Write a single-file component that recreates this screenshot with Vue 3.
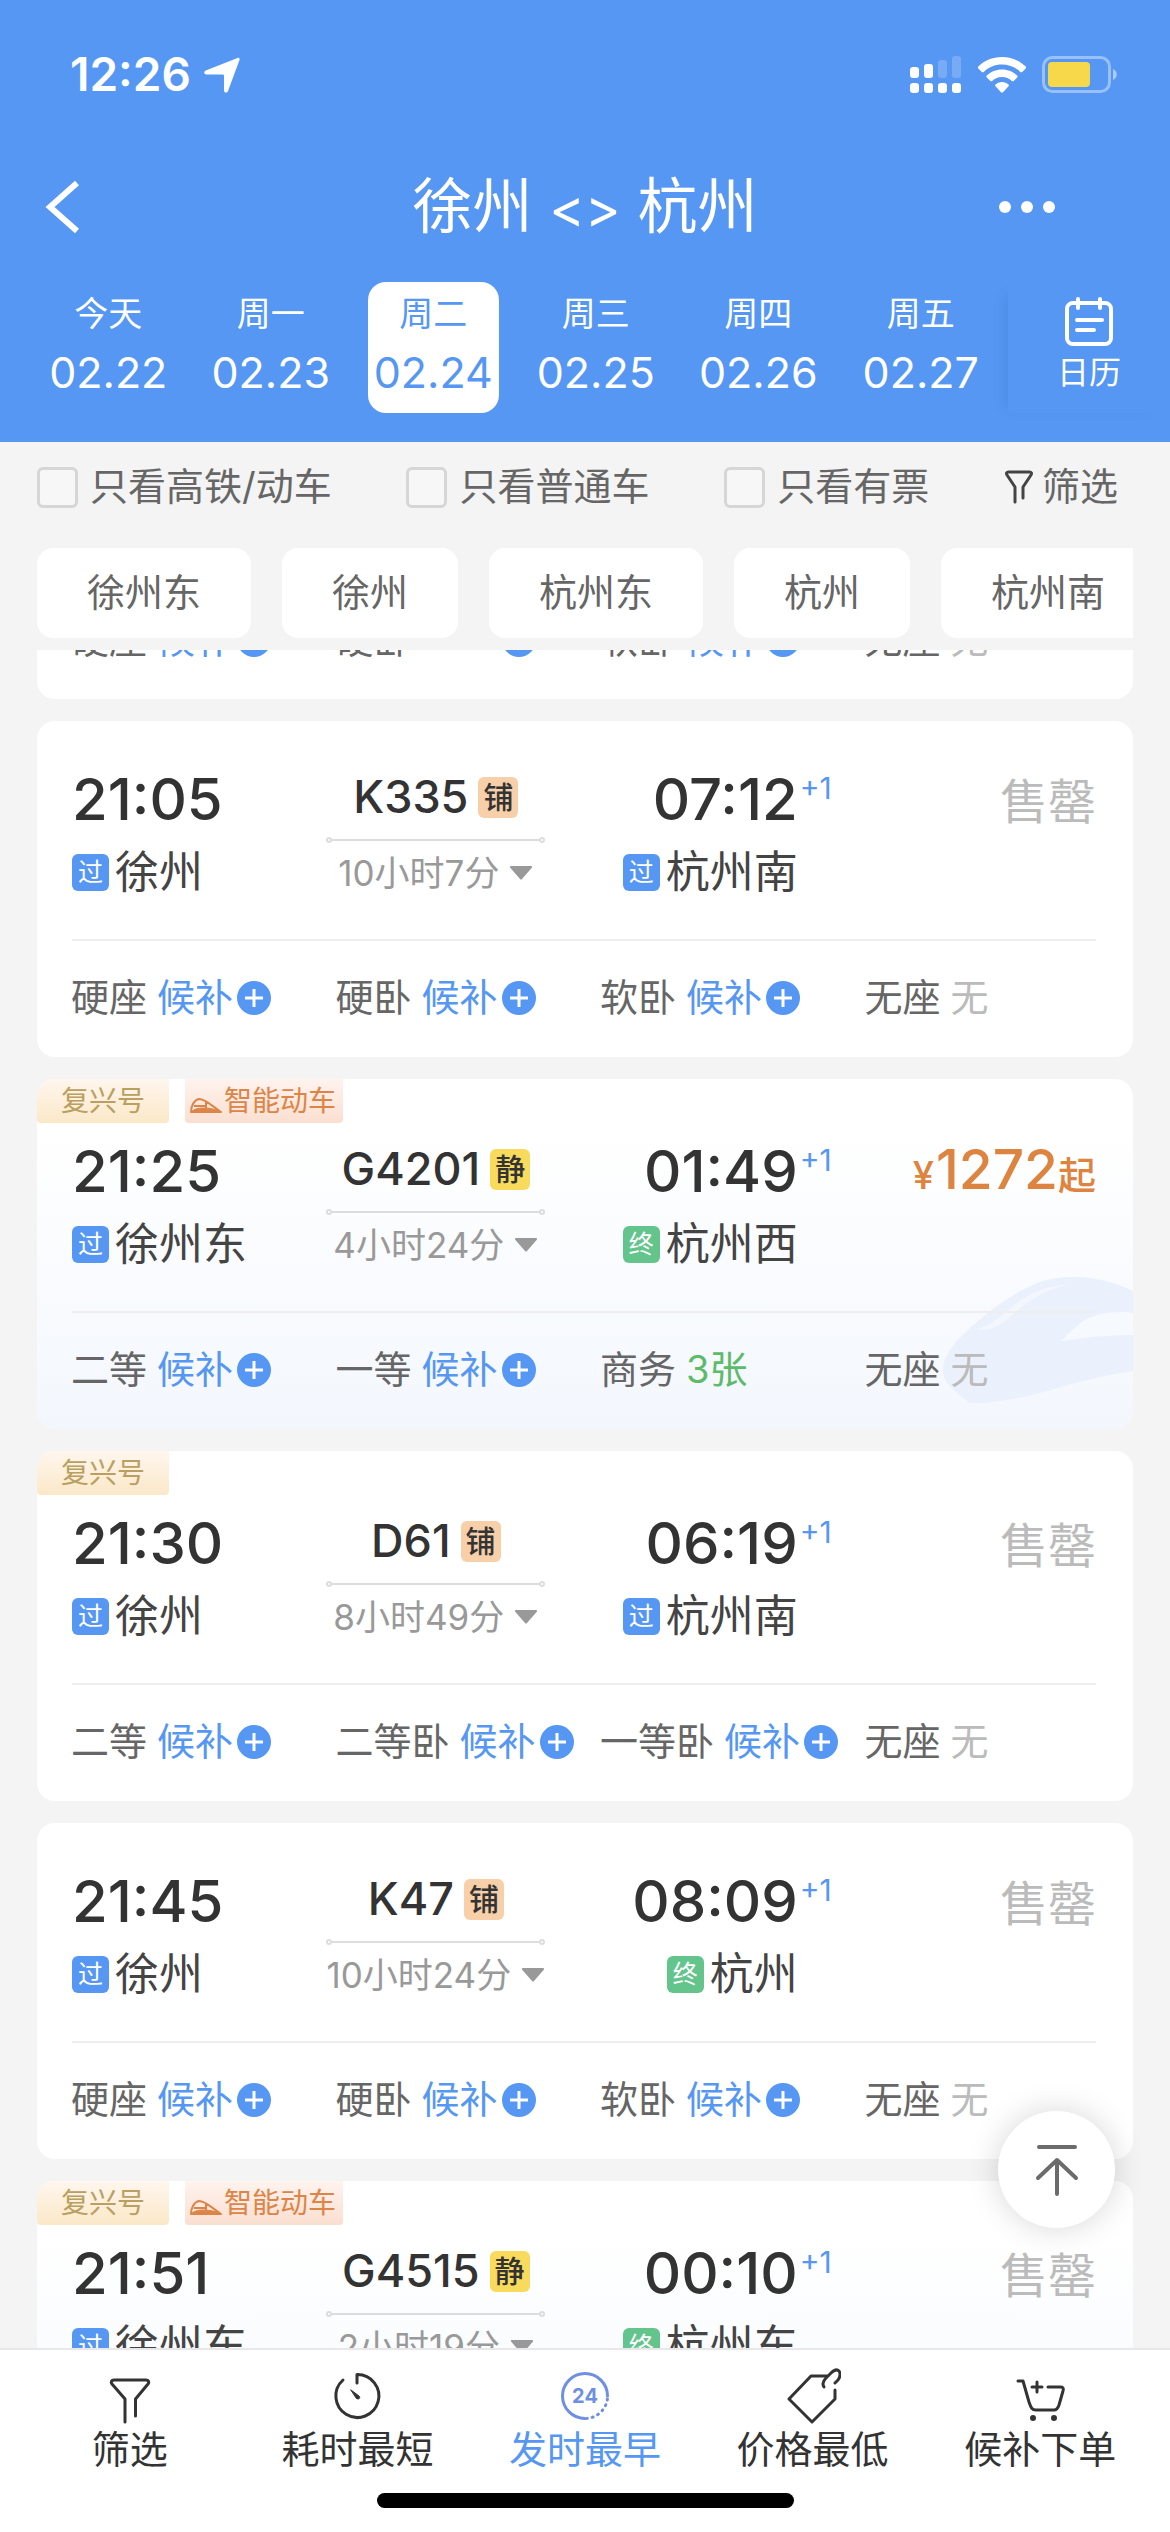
<script setup>
    import { ref, onMounted } from 'vue'

    const dates = [
        { week: '今天', day: '02.22' },
        { week: '周一', day: '02.23' },
        { week: '周二', day: '02.24' },
        { week: '周三', day: '02.25' },
        { week: '周四', day: '02.26' },
        { week: '周五', day: '02.27' },
    ]
    const activeDay = ref('02.24')

    const filters = ref([
        { id: 'gaotie', label: '只看高铁/动车', checked: false },
        { id: 'putong', label: '只看普通车', checked: false },
        { id: 'youpiao', label: '只看有票', checked: false },
    ])

    const stations = ['徐州东', '徐州', '杭州东', '杭州', '杭州南']

    const wait = (name) => ({ name, type: 'wait', text: '候补' })
    const none = { name: '无座', type: 'none', text: '无' }

    const trains = [
        {
            seats: [wait('硬座'), { name: '硬卧', type: 'wait', text: '' }, wait('软卧'), none],
        },
        {
            code: 'K335', mark: '铺', start: '21:05', end: '07:12', time: '10小时7分',
            from: '徐州', to: '杭州南', toMark: '过',
            seats: [wait('硬座'), wait('硬卧'), wait('软卧'), none],
        },
        {
            code: 'G4201', mark: '静', start: '21:25', end: '01:49', time: '4小时24分',
            from: '徐州东', to: '杭州西', toMark: '终', fuxing: true, smart: true, price: 1272,
            seats: [wait('二等'), wait('一等'), { name: '商务', type: 'left', text: '3张' }, none],
        },
        {
            code: 'D61', mark: '铺', start: '21:30', end: '06:19', time: '8小时49分',
            from: '徐州', to: '杭州南', toMark: '过', fuxing: true,
            seats: [wait('二等'), wait('二等卧'), wait('一等卧'), none],
        },
        {
            code: 'K47', mark: '铺', start: '21:45', end: '08:09', time: '10小时24分',
            from: '徐州', to: '杭州', toMark: '终',
            seats: [wait('硬座'), wait('硬卧'), wait('软卧'), none],
        },
        {
            code: 'G4515', mark: '静', start: '21:51', end: '00:10', time: '2小时19分',
            from: '徐州东', to: '杭州东', toMark: '终', fuxing: true, smart: true,
            seats: [],
        },
    ]

    const sorts = [
        { id: 'filter', label: '筛选' },
        { id: 'short', label: '耗时最短' },
        { id: 'early', label: '发时最早' },
        { id: 'cheap', label: '价格最低' },
        { id: 'order', label: '候补下单' },
    ]
    const activeSort = ref('early')

    const list = ref(null)

    const toTop = () => {
        list.value.scrollTop = 0
    }

    // the list opens just above the 21:05 train
    onMounted(() => {
        list.value.scrollTop = 67
    })
</script>

<template>
    <div class="page">
        <header class="header">
            <div class="status-bar">
                <div class="clock">
                    <span>12:26</span>
                    <svg width="38" height="38" viewBox="0 0 38 38"><path d="M34.500 2c1.400-.6 2.500.5 2 1.900L25 35c-.9 2.300-4 1.900-4-.6V20c0-1-.5-1.500-1.500-1.500H3.500c-2.600 0-3-3-.7-4z" fill="#fff"/></svg>
                </div>
                <div class="signals">
                    <svg width="52" height="38" viewBox="0 0 52 38" fill="#fff">
                        <rect x="0" y="11" width="9" height="11" rx="3"/>
                        <rect x="14" y="8" width="9" height="14" rx="3"/>
                        <rect x="28" y="4" width="9" height="18" rx="3" opacity=".2"/>
                        <rect x="42" y="0" width="9" height="22" rx="3" opacity=".2"/>
                        <rect x="0" y="27" width="9" height="10" rx="3"/>
                        <rect x="14" y="27" width="9" height="10" rx="3"/>
                        <rect x="28" y="27" width="9" height="10" rx="3"/>
                        <rect x="42" y="27" width="9" height="10" rx="3"/>
                    </svg>
                    <svg width="50" height="38" viewBox="0 0 50 38" fill="#fff">
                        <path d="M25 1C15.500 1 7 4.800 1.300 10.500c-.6.600-.6 1.300 0 1.900l3.500 3.500c.6.600 1.300.6 1.900 0C11.500 11.300 18 8.600 25 8.600s13.500 2.700 18.300 7.300c.6.600 1.300.6 1.900 0l3.500-3.500c.6-.6.6-1.300 0-1.900C43 4.800 34.500 1 25 1z"/>
                        <path d="M25 13.500c-6 0-11.300 2.300-15.200 6-.6.600-.6 1.300 0 1.900l3.500 3.500c.6.600 1.300.6 1.900 0 2.600-2.400 6-3.800 9.800-3.800s7.200 1.400 9.800 3.800c.6.600 1.300.6 1.900 0l3.500-3.500c.6-.6.6-1.300 0-1.900-3.900-3.700-9.200-6-15.200-6z"/>
                        <path d="M25 26c-2.500 0-4.800.9-6.500 2.400-.6.500-.6 1.200 0 1.800l5.500 6c.6.600 1.400.6 2 0l5.500-6c.6-.6.600-1.300 0-1.800C29.800 26.900 27.500 26 25 26z"/>
                    </svg>
                    <svg width="76" height="38" viewBox="0 0 76 38">
                        <rect x="1.500" y="1.500" width="66" height="34" rx="9" fill="none" stroke="#fff" stroke-width="3" opacity=".4"/>
                        <rect x="6" y="6" width="42" height="25" rx="4" fill="#f7d84b"/>
                        <path d="M71 13c5 2 5 9 0 11z" fill="#fff" opacity=".5"/>
                    </svg>
                </div>
            </div>

            <div class="nav">
                <button class="nav-btn back" aria-label="返回">
                    <svg width="38" height="56" viewBox="0 0 38 56"><path d="M33 4L6 28l27 24" fill="none" stroke="#fff" stroke-width="6"/></svg>
                </button>
                <h1 class="title">徐州 <span>&lt;&gt;</span> 杭州</h1>
                <button class="nav-btn more" aria-label="更多">
                    <svg width="58" height="14" viewBox="0 0 58 14" fill="#fff">
                        <circle cx="7" cy="7" r="6"/>
                        <circle cx="29" cy="7" r="6"/>
                        <circle cx="51" cy="7" r="6"/>
                    </svg>
                </button>
            </div>

            <div class="days">
                <div class="day-cell" v-for="d in dates" :key="d.day">
                    <button class="day" :class="{ active: activeDay === d.day }" @click="activeDay = d.day">
                        <span class="week">{{ d.week }}</span>
                        <span class="date">{{ d.day }}</span>
                    </button>
                </div>
                <button class="calendar">
                    <svg width="50" height="50" viewBox="0 0 50 50" fill="none" stroke="#fff" stroke-width="4" stroke-linecap="round">
                        <rect x="3" y="6" width="44" height="41" rx="6"/>
                        <path d="M14 2v9M36 2v9M13 23h25M13 33h17"/>
                    </svg>
                    <span>日历</span>
                </button>
            </div>
        </header>

        <div class="filters">
            <label class="check" v-for="f in filters" :key="f.id" :for="f.id">
                <input type="checkbox" :id="f.id" v-model="f.checked">
                {{ f.label }}
            </label>
            <button class="filter-btn">
                <svg width="30" height="34" viewBox="0 0 30 34" fill="none" stroke="#444" stroke-width="3" stroke-linecap="round" stroke-linejoin="round"><path d="M11 32V17L3 5c-1-1.500-.5-3 1.500-3h21c2 0 2.500 1.500 1.500 3l-8 12v11"/></svg>
                筛选
            </button>
        </div>

        <div class="stations">
            <button class="chip" v-for="s in stations" :key="s">{{ s }}</button>
        </div>

        <main class="list" ref="list">
            <article class="card" :class="{ smart: t.smart }" v-for="(t, i) in trains" :key="i">
                <svg v-if="t.smart" class="train-bg" width="192" height="128" viewBox="0 0 192 128">
                    <path d="M192 16C160 0 120-2 94 9 66 21 40 42 22 60 8 73 2 84 2 96c0 12 10 18 24 30 3 3 10 3 18 2 20-2 42-6 62-12 30-9 58-16 86-20z" fill="#eaf1fc"/>
                    <path d="M120 66c8-8 16-16 24-21 5-3 10-5 16-6 10-2 22-3 32-1v22c-24 0-48 2-72 6z" fill="#f6f9fe"/>
                    <path d="M36 54c10 3 22-2 34-13 18-16 34-26 58-32-30 3-46 13-62 27-10 9-20 16-30 18z" fill="#f3f7fd"/>
                </svg>
                <div class="tags" v-if="t.fuxing">
                    <span class="tag fuxing">复兴号</span>
                    <span class="tag zhineng" v-if="t.smart">
                        <svg width="32" height="18" viewBox="0 0 32 18" fill="none" stroke="#dc8548" stroke-width="2" stroke-linejoin="round">
                            <path d="M1 15c0-6 3-12 8-13 7 0 14 8 22 13zM4 9h12M16 5v6"/>
                            <path d="M1 15c3-3 7-4 12-4 7 0 12 1 18 4z" fill="#dc8548" stroke-width="1"/>
                        </svg>
                        智能动车
                    </span>
                </div>

                <div class="info" v-if="t.code">
                    <div class="depart">
                        <div class="hour">{{ t.start }}</div>
                        <div class="station"><i class="mark pass">过</i>{{ t.from }}</div>
                    </div>
                    <div class="middle">
                        <div class="code">
                            {{ t.code }}
                            <i class="kind" :class="{ quiet: t.mark === '静' }">{{ t.mark }}</i>
                        </div>
                        <div class="line"></div>
                        <button class="duration">
                            {{ t.time }}
                            <svg width="24" height="16" viewBox="0 0 24 16"><path d="M2 1h20c1 0 1.500 1 .8 1.800L13 14c-.6.700-1.400.7-2 0L1.200 2.800C.5 2 1 1 2 1z" fill="#999"/></svg>
                        </button>
                    </div>
                    <div class="arrive">
                        <div class="hour">{{ t.end }}<sup>+1</sup></div>
                        <div class="station">
                            <i class="mark" :class="t.toMark === '终' ? 'final' : 'pass'">{{ t.toMark }}</i>{{ t.to }}
                        </div>
                    </div>
                    <div class="price" v-if="t.price"><small>¥</small>{{ t.price }}<b>起</b></div>
                    <div class="sold" v-else>售罄</div>
                </div>

                <div class="seats">
                    <div class="seat" v-for="s in t.seats" :key="s.name">
                        <span>{{ s.name }}</span>
                        <button v-if="s.type === 'wait'" class="wait">
                            <span>{{ s.text }}</span>
                            <svg width="34" height="34" viewBox="0 0 34 34"><circle cx="17" cy="17" r="17" fill="#5597f2"/><path d="M8 17h18M17 8v18" stroke="#fff" stroke-width="3"/></svg>
                        </button>
                        <span v-else :class="s.type">{{ s.text }}</span>
                    </div>
                </div>
            </article>
        </main>

        <button class="to-top" aria-label="回到顶部" @click="toTop">
            <svg width="44" height="54" viewBox="0 0 44 54" fill="none" stroke="#6b6b6b" stroke-width="4" stroke-linecap="round" stroke-linejoin="round">
                <path d="M4 4h36M22 17v34M3 35l19-18 19 18"/>
            </svg>
        </button>

        <footer class="footer">
            <nav class="tabs">
                <button class="tab" v-for="s in sorts" :key="s.id" :class="{ active: activeSort === s.id }" @click="activeSort = s.id">
                    <svg width="56" height="56" viewBox="0 0 56 56" fill="none" stroke="#333" stroke-width="3" stroke-linecap="round" stroke-linejoin="round">
                        <template v-if="s.id === 'filter'">
                            <path d="M23 54V31L10 16c-1.500-2-.5-4 2-4h32c2.500 0 3.500 2 2 4L33.500 31v17"/>
                        </template>
                        <template v-else-if="s.id === 'short'">
                            <path d="M14 12A21.500 21.500 0 1 0 28 6.500V15"/>
                            <path d="M22 22l8 6c2 2-.5 4-2.500 2.500z" fill="#333" stroke-width="1"/>
                        </template>
                        <template v-else-if="s.id === 'early'">
                            <path d="M28 50.500A22.500 22.500 0 1 1 50.500 28" stroke="#6f8fe0"/>
                            <path d="M50.400 31A22.500 22.500 0 0 1 30 50.400" stroke="#6f8fe0" stroke-dasharray="1 5"/>
                            <text x="28" y="35" class="day-text">24</text>
                        </template>
                        <template v-else-if="s.id === 'cheap'">
                            <path d="M42 8H26L4 31l23 23 23-23v-9"/>
                            <path d="M39 19c-2-3-1-6 2-9l5-5c3-3 6-4 8-2 2 3 1 6-1 9l-3 3"/>
                        </template>
                        <template v-else>
                            <path d="M6 13h5l6 21c2 6 3 8 7 8h18c3 0 4-2 5-5l4-14c1-3 0-4-3-4H36M25 14v10M20 19h10"/>
                            <circle cx="21" cy="50" r="2" fill="#333" stroke-width="2"/>
                            <circle cx="42" cy="50" r="2" fill="#333" stroke-width="2"/>
                        </template>
                    </svg>
                    <span>{{ s.label }}</span>
                </button>
            </nav>
            <div class="home-bar"></div>
        </footer>
    </div>
</template>

<style>
    body {
        margin: 0;
        background-color: #f4f4f4;
    }
</style>

<style scoped>
    .page {
        position: relative;
        height: 100vh;
        display: flex;
        flex-direction: column;
        overflow: hidden;
        background-color: #f4f4f4;
        color: #333;
        font-family: Inter, "Noto Sans CJK SC", sans-serif;
        line-height: 1.2;
    }

    button {
        border: none;
        padding: 0;
        background: none;
        color: inherit;
        font: inherit;
        cursor: pointer;
    }

    svg {
        display: block;
        flex-shrink: 0;
    }

    i {
        font-style: normal;
    }

    .header {
        padding-bottom: 29px;
        background-color: #5597f2;
        color: #fff;
    }

    .status-bar {
        display: flex;
        justify-content: space-between;
        align-items: center;
        height: 64px;
        padding: 43px 52px 25px 70px;
    }

    .clock {
        display: flex;
        align-items: center;
        gap: 12px;
        font-size: 46px;
        font-weight: 600;
    }

    .signals {
        display: flex;
        gap: 15px;
    }

    .nav {
        display: grid;
        grid-template-columns: 1fr auto 1fr;
        align-items: center;
        height: 150px;
        padding: 0 44px;
    }

    .title {
        margin: 0;
        font-size: 60px;
        font-weight: 400;
        line-height: 80px;
    }

    .title span {
        font-size: 54px;
    }

    .more {
        justify-self: end;
        margin-right: 70px;
    }

    .days {
        display: flex;
        padding-left: 27px;
    }

    .day-cell {
        flex: 1;
        display: flex;
        justify-content: center;
    }

    .day {
        display: flex;
        flex-direction: column;
        align-items: center;
        width: 131px;
        padding: 6px 0 9px;
        border-radius: 18px;
    }

    .day.active {
        background-color: #fff;
        color: #5597f2;
    }

    .week {
        font-size: 34px;
        line-height: 52px;
    }

    .date {
        font-size: 43px;
        line-height: 64px;
    }

    .calendar {
        display: flex;
        flex-direction: column;
        align-items: center;
        width: 162px;
        margin-left: 6px;
        padding-top: 15px;
        box-shadow: -12px 4px 12px -10px rgba(40, 90, 180, 0.2);
    }

    .calendar span {
        font-size: 32px;
        line-height: 52px;
    }

    .filters {
        display: flex;
        justify-content: space-between;
        align-items: center;
        height: 90px;
        padding: 0 52px 0 37px;
        color: #666;
        font-size: 38px;
    }

    .check {
        display: flex;
        align-items: center;
        gap: 12px;
    }

    .check input {
        appearance: none;
        box-sizing: border-box;
        width: 41px;
        height: 41px;
        margin: 0;
        border: 3px solid #d6d6d6;
        border-radius: 6px;
        background-color: #f7f7f7;
    }

    .check input:checked {
        background-color: #5597f2;
    }

    .filter-btn {
        display: flex;
        align-items: center;
        gap: 8px;
    }

    .stations {
        display: flex;
        gap: 31px;
        margin: 16px 37px 12px;
        overflow: hidden;
    }

    .chip {
        flex-shrink: 0;
        height: 90px;
        padding: 0 50px;
        border-radius: 16px;
        background-color: #fff;
        color: #666;
        font-size: 38px;
    }

    .list {
        flex: 1;
        min-height: 0;
        display: flex;
        flex-direction: column;
        gap: 22px;
        padding: 0 37px;
        overflow-y: auto;
        scrollbar-width: none;
    }

    .card {
        position: relative;
        flex-shrink: 0;
        border-radius: 18px;
        background-color: #fff;
        overflow: hidden;
    }

    .card.smart {
        background: linear-gradient(#fff 15%, #f3f7fd);
    }

    .train-bg {
        position: absolute;
        right: 0;
        bottom: 26px;
    }

    .tags {
        display: flex;
        gap: 16px;
        height: 44px;
        margin-bottom: -30px;
    }

    .tag {
        display: flex;
        align-items: center;
        border-radius: 0 0 4px 4px;
        font-size: 28px;
        line-height: 42px;
    }

    .fuxing {
        padding: 0 24px;
        background: linear-gradient(#fff6ee, #fbe8c8);
        color: #b9a060;
    }

    .zhineng {
        gap: 2px;
        padding: 0 7px 0 5px;
        background: linear-gradient(#fff3ee, #fadfd0);
        color: #dc8548;
    }

    .zhineng svg {
        margin-top: 10px;
    }

    .info {
        position: relative;
        display: grid;
        grid-template-columns: 254fr 219fr 252fr 298fr;
        margin: 0 37px 0 35px;
        padding: 46px 0 42px;
        border-bottom: 2px solid #eee;
    }

    .hour {
        position: relative;
        font-size: 58px;
        font-weight: 500;
        line-height: 64px;
    }

    .hour sup {
        position: absolute;
        left: 100%;
        top: 0;
        padding-left: 2px;
        color: #5597f2;
        font-size: 30px;
        font-weight: 400;
        line-height: 42px;
    }

    .station {
        display: flex;
        align-items: center;
        gap: 6px;
        margin-top: 17px;
        color: #444;
        font-size: 44px;
        line-height: 48px;
    }

    .mark {
        width: 37px;
        border-radius: 6px;
        color: #fff;
        font-size: 25px;
        line-height: 37px;
        text-align: center;
    }

    .pass {
        background-color: #5597f2;
    }

    .final {
        background-color: #63c48c;
    }

    .middle {
        display: flex;
        flex-direction: column;
        align-items: center;
    }

    .code {
        display: flex;
        align-items: center;
        gap: 10px;
        font-size: 45px;
        font-weight: 500;
        line-height: 60px;
    }

    .kind {
        width: 40px;
        border-radius: 6px;
        background-color: #f7cfa8;
        font-size: 30px;
        line-height: 41px;
        text-align: center;
    }

    .kind.quiet {
        background-color: #f8da5c;
    }

    .line {
        position: relative;
        width: 100%;
        height: 2px;
        margin: 12px 0 8px;
        background-color: #ddd;
    }

    .line::before,
    .line::after {
        content: "";
        position: absolute;
        top: -2px;
        left: 0;
        width: 2px;
        height: 2px;
        border: 2px solid #ddd;
        border-radius: 50%;
        background-color: #fff;
    }

    .line::after {
        left: auto;
        right: 0;
    }

    .duration {
        display: flex;
        align-items: center;
        gap: 10px;
        color: #999;
        font-size: 35px;
        line-height: 48px;
        white-space: nowrap;
    }

    .arrive {
        display: flex;
        flex-direction: column;
        align-items: flex-end;
    }

    .sold {
        color: #bbb;
        font-size: 48px;
        line-height: 70px;
        text-align: right;
    }

    .price {
        color: #dd8440;
        font-size: 55px;
        font-weight: 500;
        line-height: 60px;
        text-align: right;
    }

    .price small {
        padding-right: 2px;
        font-size: 38px;
    }

    .price b {
        font-size: 38px;
        font-weight: 500;
    }

    .seats {
        position: relative;
        box-sizing: border-box;
        display: grid;
        grid-template-columns: repeat(4, 1fr);
        height: 116px;
        padding: 0 4px 2px 34px;
        color: #666;
        font-size: 38px;
    }

    .seat {
        display: flex;
        align-items: center;
        gap: 10px;
        white-space: nowrap;
    }

    .wait {
        display: flex;
        align-items: center;
        gap: 4px;
        color: #5597f2;
    }

    .wait span {
        min-width: 76px;
    }

    .none {
        color: #bbb;
    }

    .left {
        color: #5dbb6a;
    }

    .to-top {
        position: absolute;
        right: 55px;
        bottom: 304px;
        display: flex;
        justify-content: center;
        align-items: center;
        width: 117px;
        height: 117px;
        border-radius: 50%;
        background-color: #fff;
        box-shadow: 0 0 32px rgba(0, 0, 0, 0.16);
    }

    .footer {
        padding-bottom: 24px;
        border-top: 2px solid #e8e8ea;
        background-color: #fff;
    }

    .tabs {
        display: flex;
        padding: 18px 16px 0;
    }

    .tab {
        flex: 1;
        display: flex;
        flex-direction: column;
        align-items: center;
        font-size: 38px;
        line-height: 50px;
    }

    .tab.active {
        color: #5597f2;
    }

    .day-text {
        fill: #6f8fe0;
        stroke: none;
        font-size: 20px;
        font-weight: 700;
        text-anchor: middle;
    }

    .home-bar {
        width: 417px;
        height: 15px;
        margin: 19px auto 0;
        border-radius: 8px;
        background-color: #000;
    }
</style>
